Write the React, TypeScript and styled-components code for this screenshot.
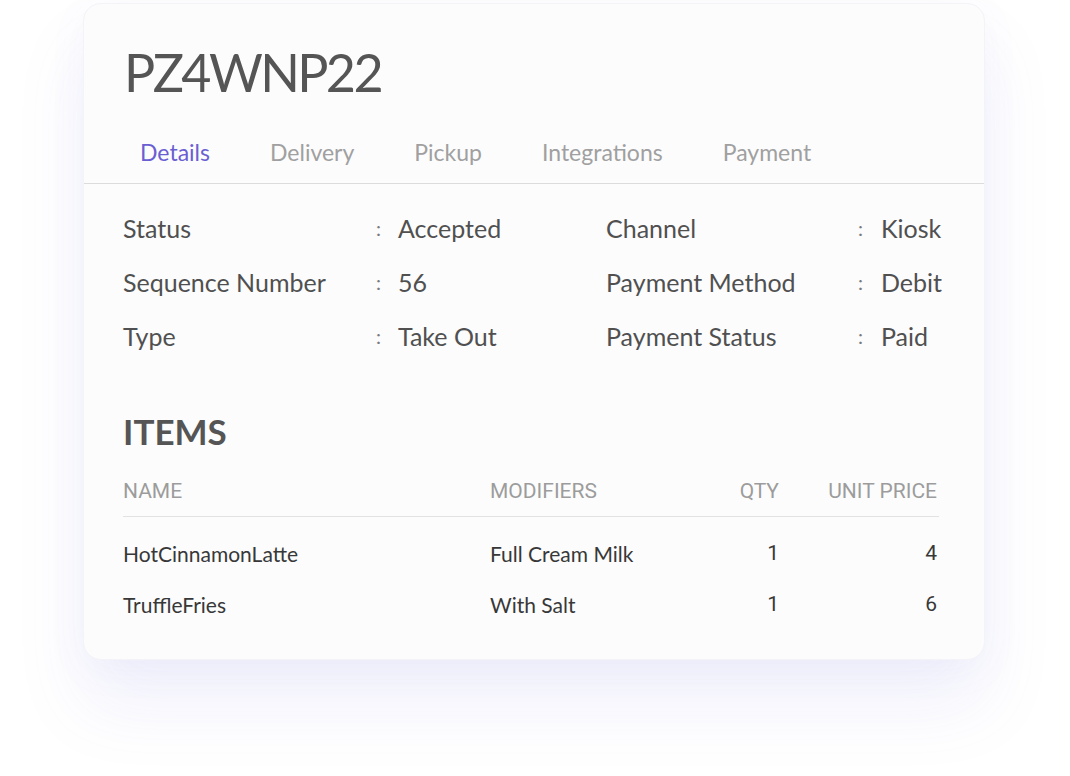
import React from "react";
import styled, { createGlobalStyle } from "styled-components";

const GlobalStyle = createGlobalStyle`
  html, body {
    margin: 0;
    padding: 0;
    background: #ffffff;
  }
  body {
    font-family: Lato, "Noto Sans", sans-serif;
    color: #4a4a4a;
  }
`;

const Page = styled.div`
  width: 1070px;
  height: 776px;
  padding: 3px 0 0 83px;
  box-sizing: border-box;
  overflow: hidden;
`;

const Card = styled.div`
  width: 902px;
  height: 657px;
  box-sizing: border-box;
  background: #fcfcfd;
  border: 1px solid #f3f3f8;
  border-radius: 18px;
  box-shadow: 0 45px 70px rgba(120, 120, 225, 0.1),
    0 10px 40px rgba(120, 120, 225, 0.05);
`;

const Title = styled.h1`
  margin: 0;
  padding: 42px 0 0 40px;
  font-size: 52px;
  font-weight: 400;
  letter-spacing: -2.6px;
  line-height: 1;
  color: #555555;
`;

const Tabs = styled.nav`
  display: flex;
  gap: 60px;
  margin-top: 41px;
  padding: 0 0 16px 56px;
  border-bottom: 1px solid #dcdcdc;
`;

const Tab = styled.span<{ $active?: boolean }>`
  font-size: 23px;
  line-height: 1.2;
  color: ${(p) => (p.$active ? "#6a5fd2" : "#a0a0a0")};
`;

const Body = styled.div`
  padding: 29px 45px 0 39px;
`;

const Details = styled.div`
  display: grid;
  grid-template-columns: 253px 22px 208px 252px 23px auto;
  row-gap: 24px;
  font-size: 25px;
  line-height: 30px;
  color: #505050;
`;

const Colon = styled.span`
  font-size: 20px;
  color: #7a7a7a;
`;

const SectionTitle = styled.h2`
  margin: 59px 0 0;
  font-size: 35px;
  font-weight: 700;
  line-height: 1.2;
  color: #555555;
`;

const Table = styled.div`
  margin-top: 27px;
  display: grid;
  grid-template-columns: 367px 1fr 90px 158px;
  padding-right: 2px;
`;

const HeadCell = styled.div<{ $right?: boolean }>`
  font-family: Roboto, "Liberation Sans", sans-serif;
  font-size: 21px;
  line-height: 25px;
  color: #9c9c9c;
  padding-bottom: 12px;
  border-bottom: 1px solid #e2e2e2;
  text-align: ${(p) => (p.$right ? "right" : "left")};
  margin-right: ${(p) => (p.$right ? "-2px" : "0")};
  padding-right: ${(p) => (p.$right ? "2px" : "0")};
`;

const Cell = styled.div<{ $right?: boolean; $first?: boolean }>`
  font-family: ${(p) =>
    p.$right ? 'Roboto, "Liberation Sans", sans-serif' : 'Lato, "Noto Sans", sans-serif'};
  font-size: 21px;
  line-height: 25px;
  color: #383838;
  padding-top: ${(p) => (p.$first ? "24px" : "26px")};
  text-align: ${(p) => (p.$right ? "right" : "left")};
`;

const details = [
  ["Status", "Accepted", "Channel", "Kiosk"],
  ["Sequence Number", "56", "Payment Method", "Debit"],
  ["Type", "Take Out", "Payment Status", "Paid"],
];

const items = [
  { name: "HotCinnamonLatte", modifiers: "Full Cream Milk", qty: 1, price: 4 },
  { name: "TruffleFries", modifiers: "With Salt", qty: 1, price: 6 },
];

const tabs = ["Details", "Delivery", "Pickup", "Integrations", "Payment"];

const App: React.FC = () => {
  return (
    <>
      <GlobalStyle />
      <Page>
        <Card>
          <Title>PZ4WNP22</Title>
          <Tabs>
            {tabs.map((t, i) => (
              <Tab key={t} $active={i === 0}>
                {t}
              </Tab>
            ))}
          </Tabs>
          <Body>
            <Details>
              {details.map((row) => (
                <React.Fragment key={row[0]}>
                  <span>{row[0]}</span>
                  <Colon>:</Colon>
                  <span>{row[1]}</span>
                  <span>{row[2]}</span>
                  <Colon>:</Colon>
                  <span>{row[3]}</span>
                </React.Fragment>
              ))}
            </Details>

            <SectionTitle>ITEMS</SectionTitle>
            <Table>
              <HeadCell>NAME</HeadCell>
              <HeadCell>MODIFIERS</HeadCell>
              <HeadCell $right>QTY</HeadCell>
              <HeadCell $right>UNIT PRICE</HeadCell>
              {items.map((item, i) => (
                <React.Fragment key={item.name}>
                  <Cell $first={i === 0}>{item.name}</Cell>
                  <Cell $first={i === 0}>{item.modifiers}</Cell>
                  <Cell $first={i === 0} $right>
                    {item.qty}
                  </Cell>
                  <Cell $first={i === 0} $right>
                    {item.price}
                  </Cell>
                </React.Fragment>
              ))}
            </Table>
          </Body>
        </Card>
      </Page>
    </>
  );
};

export default App;
